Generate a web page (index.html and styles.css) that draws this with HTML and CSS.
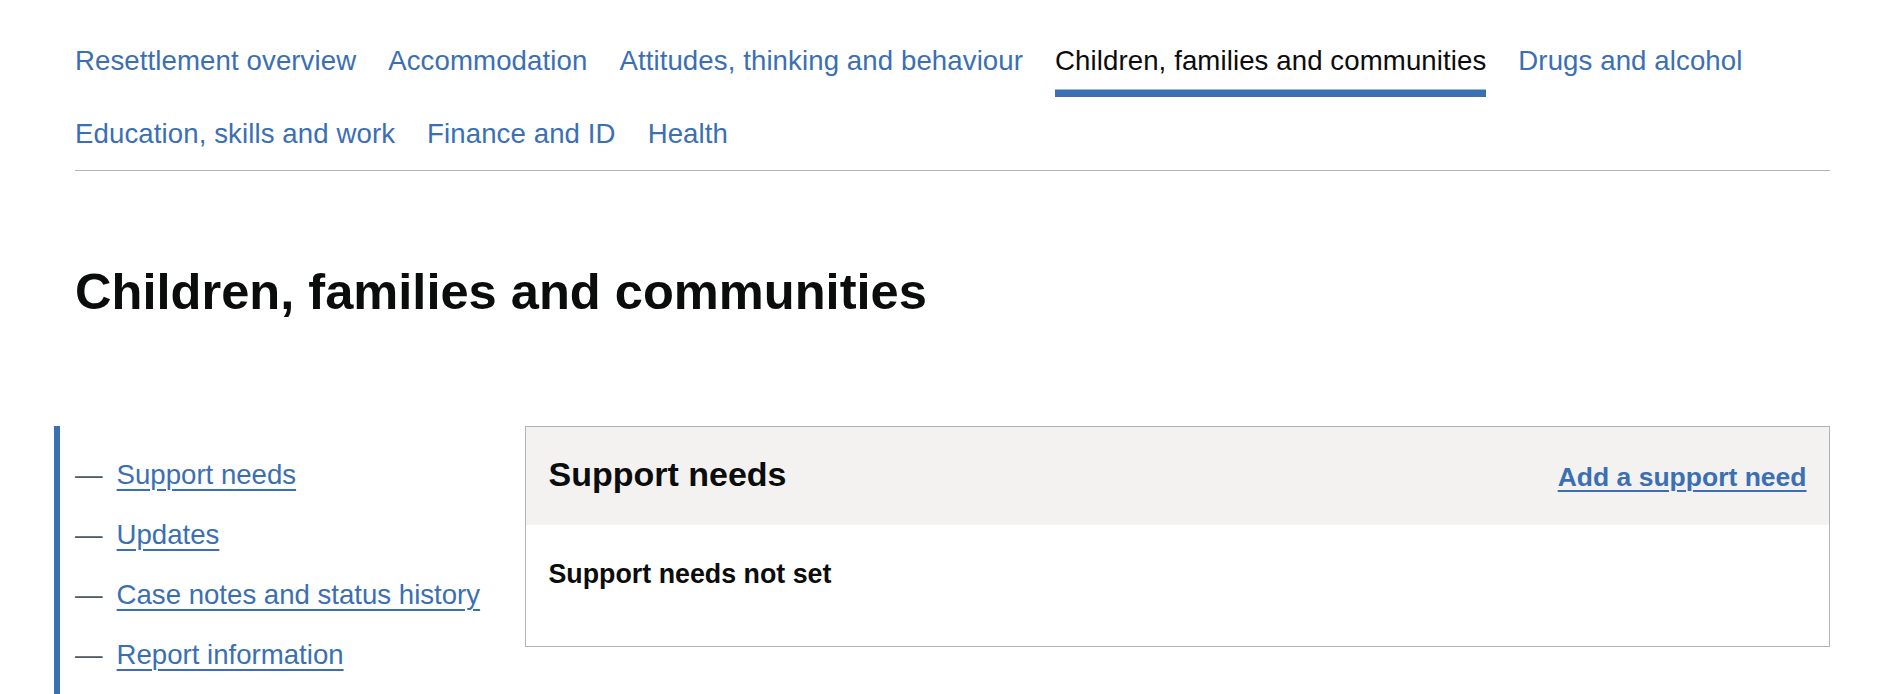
FILE: index.html
```html
<!DOCTYPE html>
<html lang="en">
<head>
<meta charset="utf-8">
<title>Children, families and communities</title>
<link rel="stylesheet" href="styles.css">
</head>
<body>
<div class="page">
  <nav class="subnav" aria-label="Pathways">
    <ul class="subnav-list">
      <li class="subnav-item"><a class="subnav-link" href="#">Resettlement overview</a></li>
      <li class="subnav-item"><a class="subnav-link" href="#">Accommodation</a></li>
      <li class="subnav-item"><a class="subnav-link" href="#">Attitudes, thinking and behaviour</a></li>
      <li class="subnav-item"><a class="subnav-link is-active" href="#" aria-current="page">Children, families and communities</a></li>
      <li class="subnav-item"><a class="subnav-link" href="#">Drugs and alcohol</a></li>
      <li class="subnav-item"><a class="subnav-link" href="#">Education, skills and work</a></li>
      <li class="subnav-item"><a class="subnav-link" href="#">Finance and ID</a></li>
      <li class="subnav-item"><a class="subnav-link" href="#">Health</a></li>
    </ul>
  </nav>

  <h1 class="page-title">Children, families and communities</h1>

  <div class="grid">
    <div class="col-side">
      <nav class="side-nav" aria-label="On this page">
        <ul class="side-list">
          <li class="side-item"><span class="dash">—</span><a class="side-link" href="#">Support needs</a></li>
          <li class="side-item"><span class="dash">—</span><a class="side-link" href="#">Updates</a></li>
          <li class="side-item"><span class="dash">—</span><a class="side-link" href="#">Case notes and status history</a></li>
          <li class="side-item"><span class="dash">—</span><a class="side-link" href="#">Report information</a></li>
        </ul>
      </nav>
    </div>
    <div class="col-main">
      <section class="card">
        <div class="card-header">
          <h2 class="card-title">Support needs</h2>
          <a class="card-action" href="#">Add a support need</a>
        </div>
        <div class="card-body">
          <p class="card-text">Support needs not set</p>
        </div>
      </section>
    </div>
  </div>
</div>
</body>
</html>
```

FILE: styles.css
```css
html, body {
  margin: 0;
  padding: 0;
  background: #ffffff;
}

body {
  font-family: "Liberation Sans", Arial, sans-serif;
  color: #0b0c0c;
}

.page {
  margin: 0 54px 0 75px;
  padding-top: 25px;
}

/* Sub navigation */
.subnav-list {
  list-style: none;
  margin: 0;
  padding: 0;
  display: flex;
  flex-wrap: wrap;
  column-gap: 32px;
  border-bottom: 1px solid #b1b4b6;
}

.subnav-link {
  display: block;
  font-size: 27.6px;
  line-height: 37.5px;
  letter-spacing: 0.1px;
  padding: 17.2px 0 17.7px;
  color: #3b6fb4;
  text-decoration: none;
}

.subnav-link.is-active {
  color: #0b0c0c;
  box-shadow: inset 0 -7.5px 0 #3b6fb4;
}

/* Heading */
.page-title {
  margin: 93.5px 0 105.5px;
  font-size: 50.6px;
  line-height: 56.2px;
  font-weight: 700;
}

/* Grid */
.grid {
  display: flex;
  margin: 0 -22.5px;
}

.col-side {
  width: 25%;
  box-sizing: border-box;
  padding: 0 22.5px 0 1.5px;
}

.col-main {
  flex: 1;
  min-width: 0;
  padding: 0 22.5px;
}

/* Side navigation */
.side-nav {
  border-left: 6px solid #3b6fb4;
  padding: 29.7px 0 30px 15px;
}

.side-list {
  list-style: none;
  margin: 0;
  padding: 0;
}

.side-item {
  display: flex;
  align-items: baseline;
  font-size: 27.6px;
  line-height: 37.5px;
  margin-bottom: 22.5px;
  white-space: nowrap;
}

.dash {
  color: #505a5f;
  margin-right: 14px;
}

.side-link {
  color: #3b6fb4;
  text-decoration: underline;
  text-decoration-thickness: 2px;
  text-underline-offset: 4.5px;
}

/* Card */
.card {
  border: 1px solid #b1b4b6;
}

.card-header {
  display: flex;
  justify-content: space-between;
  align-items: baseline;
  background: #f3f2f1;
  padding: 24.7px 22.5px 28.3px;
}

.card-title {
  margin: 0;
  font-size: 34px;
  line-height: 45px;
  font-weight: 700;
}

.card-action {
  font-size: 26.5px;
  line-height: 37.5px;
  font-weight: 700;
  color: #3b6fb4;
  text-decoration: underline;
  text-decoration-thickness: 2px;
  text-underline-offset: 4px;
}

.card-body {
  padding: 31.5px 22.5px 52px;
}

.card-text {
  margin: 0;
  font-size: 26.8px;
  line-height: 37.5px;
  font-weight: 700;
}
```
